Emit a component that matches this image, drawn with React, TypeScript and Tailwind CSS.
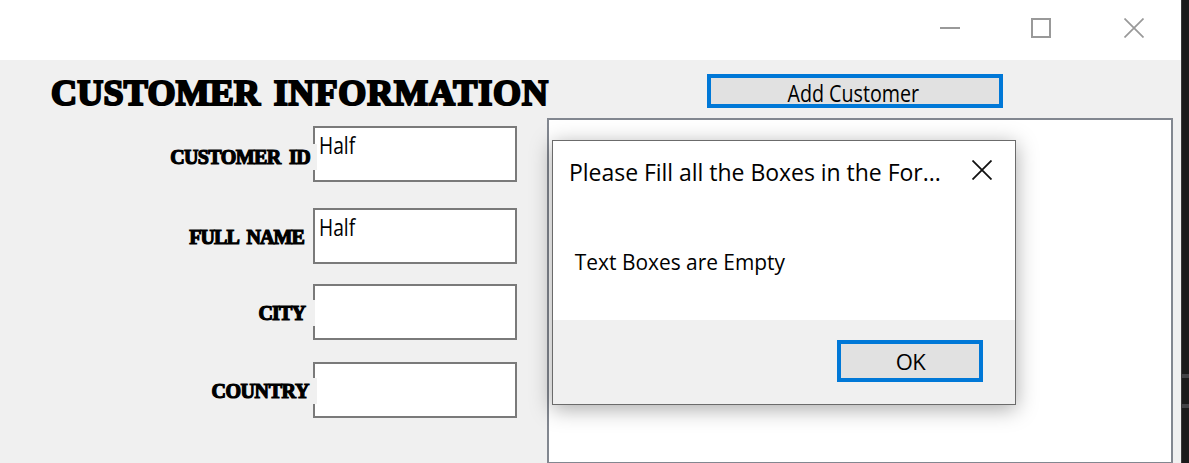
import { clsx } from 'clsx';

const LABEL =
  "relative z-10 h-[26px] shrink-0 whitespace-nowrap bg-[#f0f0f0] text-right font-['Liberation_Serif',serif] text-[20px] leading-[26px] font-bold [-webkit-text-stroke:1.2px_black]";

const fields = [
  { label: 'CUSTOMER ID', value: 'Half', row: '', labelClass: 'mt-[18px] w-[317px] -mr-[4px] pr-[7px] tracking-[-0.6px] [word-spacing:4px]' },
  { label: 'FULL NAME', value: 'Half', row: 'mt-[26px]', labelClass: 'mt-4 w-[313px] pr-[9px] tracking-[-0.9px] [word-spacing:4.5px]' },
  { label: 'CITY', value: '', row: 'mt-5', labelClass: 'mt-4 w-[315px] -mr-[2px] pr-[10px] tracking-[-0.9px]' },
  { label: 'COUNTRY', value: '', row: 'mt-[22px]', labelClass: 'mt-4 w-[317px] -mr-[4px] pr-[8px] tracking-[-0.4px]' },
];

function CloseIcon({ color, width }: { color: string; width: number }) {
  return (
    <svg width="20" height="20" viewBox="0 0 20 20" fill="none" stroke={color} strokeWidth={width}>
      <path d="M0.5 0.5L19.5 19.5M19.5 0.5L0.5 19.5" />
    </svg>
  );
}

function TitleBar() {
  return (
    <header className="flex h-[60px] items-start justify-end bg-white pt-[18px] pr-[37px]">
      <svg className="mr-[71px]" width="20" height="20" viewBox="0 0 20 20">
        <path d="M0 10H20" stroke="#999" strokeWidth="2" />
      </svg>
      <svg className="mr-[73px]" width="20" height="20" viewBox="0 0 20 20" fill="none">
        <path d="M1 1H19V19H1Z" stroke="#999" strokeWidth="2" />
      </svg>
      <CloseIcon color="#999" width={1.7} />
    </header>
  );
}

function MessageBox() {
  return (
    <div
      role="dialog"
      className="absolute top-[20px] left-[3px] flex h-[265px] w-[464px] flex-col border border-[#6b6b6b] bg-white shadow-[0_4px_20px_rgba(0,0,0,0.34)]"
    >
      <div className="flex justify-between pt-[16px] pr-[23px] pl-[16px]">
        <h2 className="text-[23px] leading-[30px] tracking-[-0.03px] whitespace-nowrap">
          Please Fill all the Boxes in the For...
        </h2>
        <div className="pt-[3px]">
          <CloseIcon color="#111" width={1.8} />
        </div>
      </div>
      <p className="mt-[59px] origin-left scale-x-[.95] pl-[23px] text-[22px] leading-[30px] whitespace-nowrap">
        Text Boxes are Empty
      </p>
      <div className="mt-auto flex h-[84px] justify-end bg-[#f0f0f0] pt-5 pr-8">
        <button className="h-[42px] w-[146px] border-4 border-[#0078d7] bg-[#e1e1e1] pt-px pl-px text-[22px] leading-[33px] tracking-[-0.5px]">
          OK
        </button>
      </div>
    </div>
  );
}

export default function App() {
  return (
    <div className="flex h-[463px] w-[1189px] overflow-hidden bg-[#1b1b1b] font-['Open_Sans',sans-serif] text-black">
      <div className="flex w-[1181px] shrink-0 flex-col">
        <TitleBar />
        <main className="flex grow bg-[#f0f0f0]">
          <section className="w-[547px] shrink-0">
            <h1 className="mt-[13px] h-10 pl-[51px] font-['Liberation_Serif',serif] text-[36px] leading-10 font-bold tracking-[0.25px] whitespace-nowrap [-webkit-text-stroke:2.2px_black] [word-spacing:4px]">
              CUSTOMER <span className="tracking-[0.9px]">INFORMATION</span>
            </h1>
            <div className="mt-[13px]">
              {fields.map((f) => (
                <div key={f.label} className={clsx('flex h-14 items-start', f.row)}>
                  <label className={clsx(LABEL, f.labelClass)}>{f.label}</label>
                  <div className="h-14 w-[204px] shrink-0 border-2 border-[#7a7a7a] bg-white pt-px pl-1">
                    <span className="block origin-left scale-x-[.8] text-[24px] leading-8">{f.value}</span>
                  </div>
                </div>
              ))}
            </div>
          </section>
          <section className="flex w-[626px] shrink-0 flex-col pt-[14px]">
            <button className="ml-[160px] flex h-[34px] w-[296px] shrink-0 justify-center border-4 border-[#0078d7] bg-[#e1e1e1] pt-[2px] pr-[4px]">
              <span className="block scale-x-[.82] text-[24px] leading-[26px] whitespace-nowrap">Add Customer</span>
            </button>
            <div className="relative mt-[10px] h-[345px] shrink-0 border-2 border-b-1 border-[#828790] bg-white">
              <MessageBox />
            </div>
          </section>
        </main>
      </div>
      <aside className="flex grow flex-col border-l border-[#383838] pt-[374px]">
        <div className="h-1 bg-[#434346]" />
        <div className="mt-[26px] h-1 bg-[#434346]" />
      </aside>
    </div>
  );
}
